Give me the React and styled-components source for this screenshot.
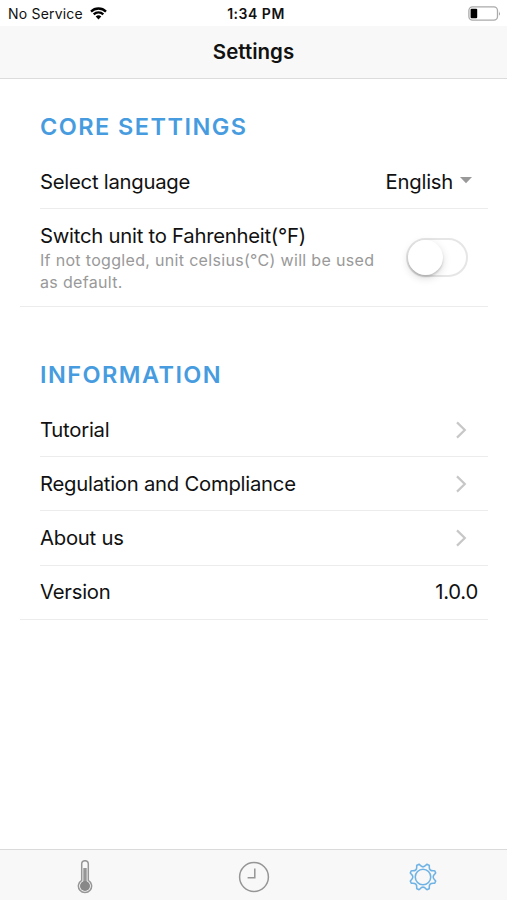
// App
// 	- StatusBar
// 	- NavBar
// 	- Core settings
// 	- Information
// 	- TabBar
import React, { useState } from 'react';
import styled, { createGlobalStyle } from 'styled-components'

const GlobalStyle = createGlobalStyle`
	body {
		margin: 0;
		background-color: #fff;
		font-family: Inter, "Liberation Sans", sans-serif;
		color: #111;
	}
	* {
		box-sizing: border-box;
	}
	svg {
		display: block;
	}
`

const Screen = styled.div`
	display: flex;
	flex-direction: column;
	height: 900px;
	width: 507px;
	overflow: hidden;
`

const StatusBar = styled.div`
	display: grid;
	grid-template-columns: 1fr auto 1fr;
	align-items: center;
	height: 26px;
	padding: 0 6px 0 8px;
	font-size: 14px;
`

const Carrier = styled.div`
	display: flex;
	align-items: center;
	gap: 7px;
	letter-spacing: 0.2px;
`

const Clock = styled.div`
	padding-left: 3px;
	font-weight: 600;
	font-size: 14px;
	letter-spacing: 0.5px;
`

const Battery = styled.div`
	justify-self: end;
`

const NavBar = styled.header`
	display: flex;
	align-items: center;
	justify-content: center;
	height: 53px;
	background-color: #f8f8f8;
	border-bottom: 1px solid #dcdcdc;
`

const Title = styled.h1`
	margin: 0;
	font-size: 20.5px;
	line-height: 24px;
	font-weight: 600;
	letter-spacing: 0;
`

const Content = styled.main`
	flex: 1;
	padding: 0 19px 0 20px;
`

const Section = styled.section`
	border-bottom: 1px solid #ececec;
	padding-left: 20px;
	padding-top: ${props => props.$top}px;
`

const Heading = styled.h2`
	margin: 0 0 14px;
	height: 29px;
	line-height: 29px;
	font-size: 23.5px;
	font-weight: 600;
	color: #479ce0;
	letter-spacing: 1.45px;
`

const Row = styled.div`
	display: flex;
	align-items: center;
	justify-content: space-between;
	height: ${props => props.$height || 54}px;
	padding-right: ${props => props.$right}px;
	border-bottom: ${props => props.$last ? 'none' : '1px solid #ececec'};
`

const Label = styled.div`
	font-size: 20.3px;
	line-height: 26px;
	letter-spacing: -0.25px;
`

const Hint = styled.div`
	width: 345px;
	font-size: 16px;
	line-height: 22px;
	color: #999;
	letter-spacing: 0.32px;
`

const Select = styled.div`
	display: flex;
	align-items: center;
	gap: 7px;
`

const Toggle = styled.button`
	display: flex;
	justify-content: ${props => props.$on ? 'flex-end' : 'flex-start'};
	align-items: center;
	width: 62px;
	height: 39px;
	padding: 0;
	border: 2px solid #e6e6e6;
	border-radius: 20px;
	background-color: ${props => props.$on ? '#479ce0' : '#fff'};
`

const Knob = styled.span`
	width: 35px;
	height: 35px;
	border-radius: 50%;
	background-color: #fff;
	box-shadow: 0 3px 8px rgba(0, 0, 0, 0.15), 0 2px 2px rgba(0, 0, 0, 0.14);
`

const TabBar = styled.nav`
	display: grid;
	grid-template-columns: repeat(3, 1fr);
	height: 51px;
	background-color: #f8f8f8;
	border-top: 1px solid #dadada;
`

const Tab = styled.div`
	display: flex;
	align-items: center;
	justify-content: center;
	padding-top: 4px;
	color: ${props => props.$active ? '#6fb3e5' : '#969696'};
`

const WifiIcon = () => (
	<svg width="17" height="13" viewBox="0 0 17 13" fill="none" stroke="#000" strokeWidth="2.3">
		<path d="M1 4.6 A10.6 10.6 0 0 1 16 4.6" />
		<path d="M3.7 7.4 A6.8 6.8 0 0 1 13.3 7.4" />
		<path d="M8.5 12.4 L5.7 9.6 A4 4 0 0 1 11.3 9.6 Z" fill="#000" stroke="none" />
	</svg>
)

const BatteryIcon = () => (
	<svg width="33" height="15" viewBox="0 0 33 15">
		<rect x="0.9" y="0.9" width="28.6" height="13.2" rx="3.6" fill="#fff" stroke="#aaa" strokeWidth="1.3" />
		<rect x="2.6" y="2.7" width="6.6" height="9.6" rx="1" fill="#000" />
		<path d="M31 5.2 Q32.7 7.5 31 9.8 Z" fill="#999" />
	</svg>
)

const Caret = () => (
	<svg width="12" height="11" viewBox="0 0 12 11">
		<path d="M0 1 H12 L6 7.2 Z" fill="#999" />
	</svg>
)

const Chevron = () => (
	<svg width="11" height="18" viewBox="0 0 11 18" fill="none" stroke="#c7c7c7" strokeWidth="2.2">
		<path d="M1 1.4 L8.8 9 L1 16.6" />
	</svg>
)

const ThermometerIcon = () => (
	<svg width="16" height="34" viewBox="0 0 16 34">
		<path d="M4.7 20.3 V4 A3.3 3.3 0 0 1 11.3 4 V20.3 A6.6 6.6 0 1 1 4.7 20.3 Z" fill="#f8f8f8" stroke="currentColor" strokeWidth="1.5" />
		<path d="M8 8 V24" stroke="currentColor" strokeWidth="3.4" />
		<circle cx="8" cy="26" r="5" fill="#888" />
	</svg>
)

const ClockIcon = () => (
	<svg width="32" height="32" viewBox="0 0 32 32" fill="none" stroke="currentColor" strokeWidth="1.5">
		<circle cx="16" cy="16" r="14.4" />
		<path d="M16.8 7.5 V16.7 H9.6" />
	</svg>
)

// eight rounded teeth, scalloped between
const gearPoint = (r, deg) => {
	const a = deg * Math.PI / 180
	return (15 + r * Math.cos(a)).toFixed(2) + ' ' + (15 + r * Math.sin(a)).toFixed(2)
}

let gearPath = 'M' + gearPoint(13.2, 14.5)
for (let i = 0; i < 8; i++) {
	const a = 22.5 + i * 45
	gearPath += ' Q' + gearPoint(14.8, a - 6) + ' ' + gearPoint(14.1, a)
	gearPath += ' Q' + gearPoint(14.8, a + 6) + ' ' + gearPoint(13.2, a + 8)
	gearPath += ' Q' + gearPoint(9, a + 22.5) + ' ' + gearPoint(13.2, a + 37)
}

const GearIcon = () => (
	<svg width="28" height="28" viewBox="0 0 30 30" fill="none" stroke="currentColor" strokeWidth="1.7" strokeLinejoin="round">
		<path d={gearPath + ' Z'} />
		<circle cx="15" cy="15" r="8.3" />
	</svg>
)

const links = [
	{ id: 1, name: 'Tutorial' },
	{ id: 2, name: 'Regulation and Compliance' },
	{ id: 3, name: 'About us' }
]

const App = () => {
	const [fahrenheit, setFahrenheit] = useState(false)

	const items = links.map(item => (
		<Row key={item.id} $right={21} $height={54.2}>
			<Label>{item.name}</Label>
			<Chevron />
		</Row>
	))

	return (
		<Screen>
			<GlobalStyle />
			<StatusBar>
				<Carrier>No Service <WifiIcon /></Carrier>
				<Clock>1:34 PM</Clock>
				<Battery><BatteryIcon /></Battery>
			</StatusBar>
			<NavBar>
				<Title>Settings</Title>
			</NavBar>
			<Content>
				<Section $top={33}>
					<Heading>CORE SETTINGS</Heading>
					<Row $right={16}>
						<Label>Select language</Label>
						<Select>
							<Label>English</Label>
							<Caret />
						</Select>
					</Row>
					<Row $height={97} $right={20} $last>
						<div>
							<Label>Switch unit to Fahrenheit(°F)</Label>
							<Hint>If not toggled, unit celsius(°C) will be used as default.</Hint>
						</div>
						<Toggle $on={fahrenheit} onClick={() => setFahrenheit(!fahrenheit)}>
							<Knob />
						</Toggle>
					</Row>
				</Section>
				<Section $top={53}>
					<Heading>INFORMATION</Heading>
					{items}
					<Row $right={10} $height={53.4} $last>
						<Label>Version</Label>
						<Label>1.0.0</Label>
					</Row>
				</Section>
			</Content>
			<TabBar>
				<Tab><ThermometerIcon /></Tab>
				<Tab><ClockIcon /></Tab>
				<Tab $active><GearIcon /></Tab>
			</TabBar>
		</Screen>
	)
}

export default App
